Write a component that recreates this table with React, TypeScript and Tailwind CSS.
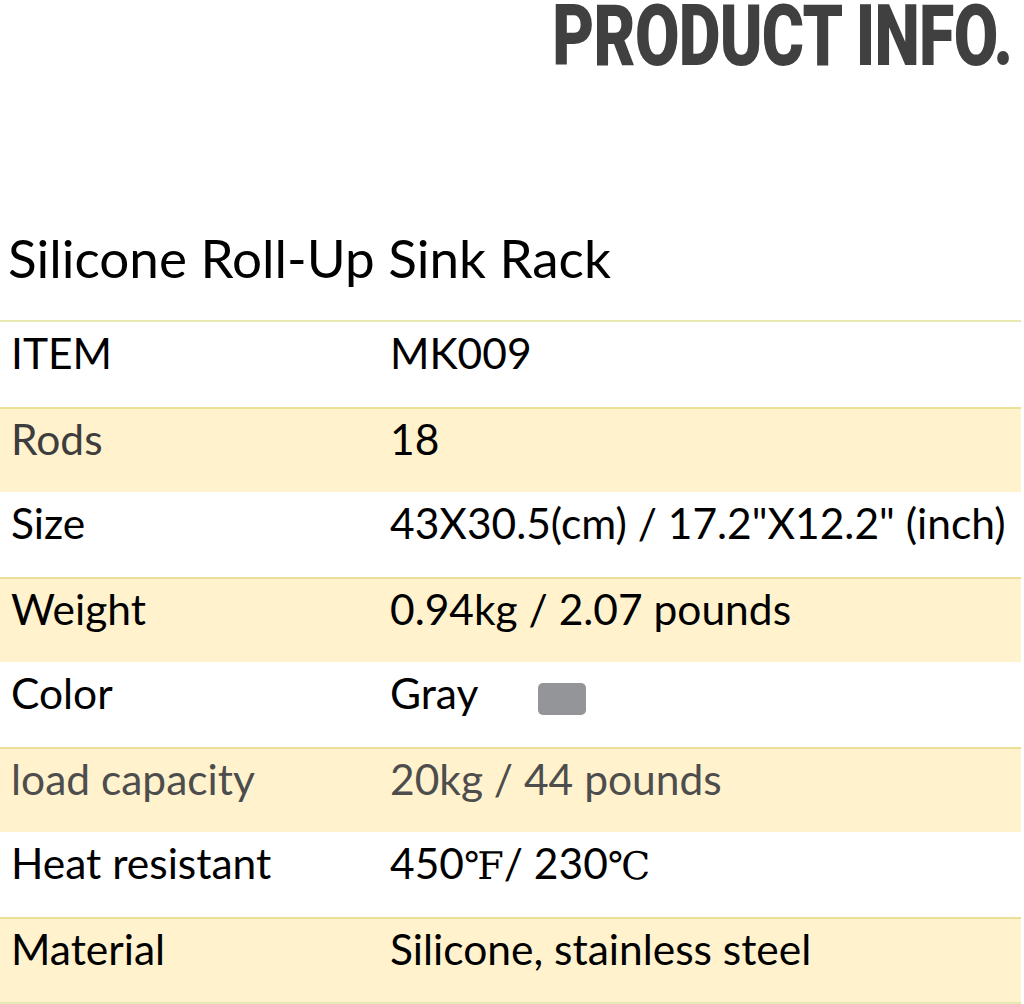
import React from "react";

type Row = { label: string; value: React.ReactNode; yellow?: boolean; labelColor?: string; valueColor?: string };

const rows: Row[] = [
  { label: "ITEM", value: "MK009" },
  { label: "Rods", value: "18", yellow: true, labelColor: "text-[#3d3d3d]" },
  { label: "Size", value: "43X30.5(cm) / 17.2\"X12.2\" (inch)" },
  { label: "Weight", value: "0.94kg / 2.07 pounds", yellow: true },
  {
    label: "Color",
    value: (
      <span className="flex items-center">
        <span>Gray</span>
        <span className="ml-[60px] mt-[12px] inline-block h-[32px] w-[48px] rounded-[5px] bg-[#939598]" />
      </span>
    ),
  },
  { label: "load capacity", value: "20kg / 44 pounds", yellow: true, labelColor: "text-[#4d4d4d]", valueColor: "text-[#4d4d4d]" },
  {
    label: "Heat resistant",
    value: (
      <span>
        450<span className="font-['DejaVu_Serif',serif] text-[38px]">℉</span>/ 230<span className="font-['DejaVu_Serif',serif] text-[38px]">℃</span>
      </span>
    ),
  },
  { label: "Material", value: "Silicone, stainless steel", yellow: true },
];

export default function App() {
  return (
    <div className="w-[1024px] h-[1004px] bg-white overflow-hidden font-['Lato',sans-serif] text-black">
      <div className="flex justify-end pr-[12px] h-[72px]">
        <div className="origin-right scale-x-[0.75] font-['Roboto',sans-serif] font-black text-[86px] leading-[72px] text-[#404040] whitespace-nowrap tracking-[-1px]">
          PRODUCT INFO.
        </div>
      </div>
      <div className="mt-[156px] pl-[8px] text-[53px] leading-[60px] h-[92px]">Silicone Roll-Up Sink Rack</div>
      <div className="w-[1021px] border-t-2 border-b-2 border-[#e9e8b0]">
        {rows.map((r, i) => (
          <div
            key={i}
            className={
              r.yellow
                ? "flex h-[85px] items-center bg-[#fff2cc] border-t-2 border-[#ecdf98] text-[42.5px]"
                : "flex h-[85px] items-center text-[42.5px]"
            }
          >
            <div className={"w-[389px] pl-[11px] pb-[24px] " + (r.labelColor ?? "")}>{r.label}</div>
            <div className={"pl-[1px] pb-[24px] " + (r.valueColor ?? "")}>{r.value}</div>
          </div>
        ))}
      </div>
    </div>
  );
}
